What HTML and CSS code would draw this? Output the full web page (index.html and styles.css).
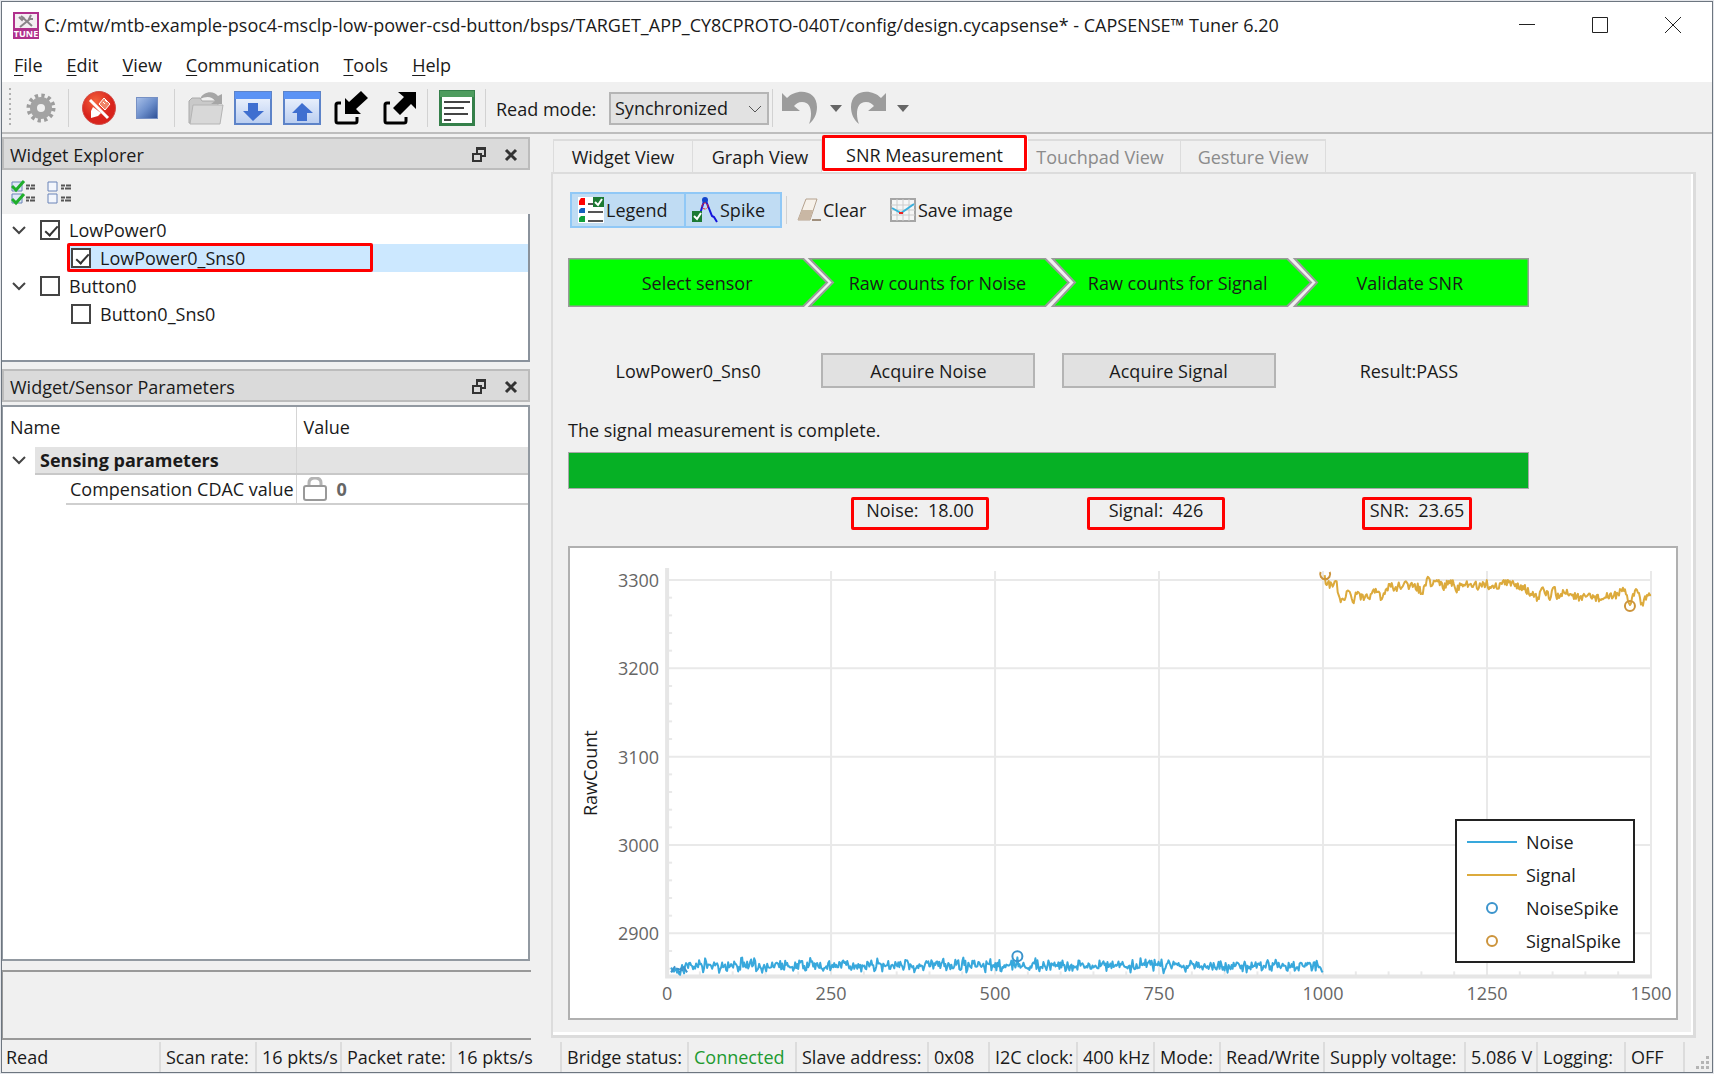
FILE: index.html
```html
<!DOCTYPE html>
<html lang="en">
<head>
<meta charset="utf-8">
<title>CAPSENSE Tuner</title>
<link rel="stylesheet" href="styles.css">
</head>
<body>
<div class="window">
  <header class="titlebar">
    <svg class="app-icon" width="26" height="27" viewBox="0 0 26 27">
      <rect x="1" y="1" width="24" height="25" fill="#f4eef2" stroke="#b0308c" stroke-width="2"/>
      <path d="M8 4l11 10M6 5l3 3 2-3M18 3l-2 4 4 0M17 7L7 15" stroke="#8a8488" stroke-width="2" fill="none"/>
      <rect x="1" y="16" width="24" height="10" fill="#b0308c"/>
      <text x="13" y="25" class="app-icon-text" text-anchor="middle">TUNE</text>
    </svg>
    <h1 class="title">C:/mtw/mtb-example-psoc4-msclp-low-power-csd-button/bsps/TARGET_APP_CY8CPROTO-040T/config/design.cycapsense* - CAPSENSE™ Tuner 6.20</h1>
    <div class="win-controls">
      <button type="button" aria-label="Minimize"><svg width="18" height="18" viewBox="0 0 18 18"><path d="M1 8.500h16" /></svg></button>
      <button type="button" aria-label="Maximize"><svg width="18" height="18" viewBox="0 0 18 18"><path d="M1.500 1.500h15v15h-15z"/></svg></button>
      <button type="button" aria-label="Close"><svg width="18" height="18" viewBox="0 0 18 18"><path d="M1 1l16 16M17 1L1 17"/></svg></button>
    </div>
  </header>

  <nav class="menubar">
    <a href="#"><u>F</u>ile</a>
    <a href="#"><u>E</u>dit</a>
    <a href="#"><u>V</u>iew</a>
    <a href="#"><u>C</u>ommunication</a>
    <a href="#"><u>T</u>ools</a>
    <a href="#"><u>H</u>elp</a>
  </nav>

  <div class="toolbar">
    <span class="handle"></span>
    <button type="button" class="tool tool-gear" aria-label="Configure">
      <svg width="30" height="30" viewBox="0 0 30 30"><circle cx="15" cy="15" r="12" fill="none" stroke="#9d9d9d" stroke-width="5" stroke-dasharray="3.140 3.140"/><circle cx="15" cy="15" r="7.500" fill="none" stroke="#a3a3a3" stroke-width="7"/></svg>
    </button>
    <span class="sep"></span>
    <button type="button" class="tool tool-disconnect" aria-label="Disconnect">
      <svg width="34" height="34" viewBox="0 0 34 34"><defs><radialGradient id="red" cx=".4" cy=".3"><stop offset="0" stop-color="#f4623c"/><stop offset="1" stop-color="#d8231c"/></radialGradient></defs><circle cx="17" cy="17" r="16.500" fill="url(#red)" stroke="#d2504a"/><path d="M8 9l18 18" stroke="#fff" stroke-width="3"/><path d="M17 13l5-6 6 6-5 6z" fill="#f08468" stroke="#fff"/><path d="M21 11l2 2M23 9l2 2" stroke="#fff"/><path d="M11 16l-2 4v7l7-2 3-3z" fill="#fff"/></svg>
    </button>
    <button type="button" class="tool tool-stop" aria-label="Stop">
      <svg width="22" height="22" viewBox="0 0 22 22"><defs><linearGradient id="blue" x1="0" y1="0" x2="1" y2="1"><stop offset="0" stop-color="#a9c1ea"/><stop offset=".5" stop-color="#6d8fcb"/><stop offset="1" stop-color="#2c4f96"/></linearGradient></defs><rect x=".5" y=".5" width="21" height="21" fill="url(#blue)" stroke="#7690c4"/></svg>
    </button>
    <span class="sep"></span>
    <button type="button" class="tool tool-open" aria-label="Open">
      <svg width="36" height="34" viewBox="0 0 36 34"><path d="M1 32V10l3-3h8l2 3h16v22z" fill="#c9c9c9" stroke="#aaa"/><path d="M2 33L5 14h30l-3 19z" fill="#d8d8d8" stroke="#b4b4b4"/><path d="M12 8C15 0 26-1 30 5l4-2v10H23l4-3c-3-5-9-5-15-2z" fill="#a6a6a6"/></svg>
    </button>
    <button type="button" class="tool tool-down" aria-label="Apply to device">
      <svg width="38" height="34" viewBox="0 0 38 34"><defs><linearGradient id="sheet" x1="0" y1="0" x2="0" y2="1"><stop offset="0" stop-color="#f4f8ff"/><stop offset="1" stop-color="#b9cdf0"/></linearGradient></defs><rect x="1" y="1" width="36" height="32" fill="url(#sheet)" stroke="#5d83c8" stroke-width="2"/><rect x="1" y="1" width="36" height="7" fill="#5b93f5"/><path d="M14 12h10v8h6L19 30 9 20h5z" fill="#3f6fd0"/></svg>
    </button>
    <button type="button" class="tool tool-up" aria-label="Apply to project">
      <svg width="38" height="34" viewBox="0 0 38 34"><rect x="1" y="1" width="36" height="32" fill="url(#sheet)" stroke="#5d83c8" stroke-width="2"/><rect x="1" y="1" width="36" height="7" fill="#5b93f5"/><path d="M14 30h10v-8h6L19 12 9 22h5z" fill="#3f6fd0"/></svg>
    </button>
    <button type="button" class="tool tool-import" aria-label="Import">
      <svg width="34" height="34" viewBox="0 0 34 34"><path d="M7 12H4q-2 0-2 2v16q0 2 2 2h17q2 0 2-2v-4" fill="none" stroke="#000" stroke-width="3"/><path d="M11 7l4 4L27 0l7 7-12 11 5 5H11z"/></svg>
    </button>
    <button type="button" class="tool tool-export" aria-label="Export">
      <svg width="34" height="34" viewBox="0 0 34 34"><path d="M7 12H4q-2 0-2 2v16q0 2 2 2h17q2 0 2-2v-4" fill="none" stroke="#000" stroke-width="3"/><path d="M15 1h18v17l-5-5-11 11-7-7L21 6z"/></svg>
    </button>
    <span class="sep"></span>
    <button type="button" class="tool tool-log" aria-label="Log">
      <svg width="36" height="36" viewBox="0 0 36 36"><rect x="1.500" y="1.500" width="33" height="33" fill="#fff" stroke="#35804a" stroke-width="3"/><rect x="1" y="1" width="34" height="6" fill="#4e9c5e"/><path d="M5 12h26M5 18h20M5 24h24M5 30h7" stroke="#444" stroke-width="2"/></svg>
    </button>
    <span class="sep"></span>
    <label class="mode-label" for="mode">Read mode:</label>
    <span class="mode">
      <select id="mode"><option>Synchronized</option></select>
      <svg width="14" height="8" viewBox="0 0 14 8"><path d="M1 1l6 6 6-6" fill="none" stroke="#555"/></svg>
    </span>
    <span class="sep"></span>
    <button type="button" class="tool tool-undo" aria-label="Undo">
      <svg width="38" height="34" viewBox="0 0 38 34"><path d="M1 2l5 5C15-3 36-2 36 16c0 7-3 13-8 17 3-7 4-22-7-22-4 0-6 2-8 4l6 5H1z" fill="#9c9c9c"/></svg>
    </button>
    <button type="button" class="tool drop" aria-label="Undo history"><svg width="12" height="7" viewBox="0 0 12 7"><path d="M0 0h12L6 7z" fill="#666"/></svg></button>
    <button type="button" class="tool tool-redo" aria-label="Redo">
      <svg width="38" height="34" viewBox="0 0 38 34"><path d="M37 2l-5 5C23-3 2-2 2 16c0 7 3 13 8 17-3-7-4-22 7-22 4 0 6 2 8 4l-6 5h18z" fill="#9c9c9c"/></svg>
    </button>
    <button type="button" class="tool drop" aria-label="Redo history"><svg width="12" height="7" viewBox="0 0 12 7"><path d="M0 0h12L6 7z" fill="#666"/></svg></button>
  </div>

  <main class="workspace">
    <aside class="docks">
      <section class="dock">
        <header class="dock-title">
          <h2>Widget Explorer</h2>
          <button type="button" aria-label="Float"><svg width="14" height="15" viewBox="0 0 14 15"><path d="M5 6V1h8v8h-3M4 2h9" fill="none" stroke="#333" stroke-width="2"/><path d="M1 7h8v7H1z" fill="none" stroke="#333" stroke-width="2"/></svg></button>
          <button type="button" aria-label="Close"><svg width="14" height="14" viewBox="0 0 14 14"><path d="M2 2l10 10M12 2L2 12" stroke="#333" stroke-width="3"/></svg></button>
        </header>
        <div class="dock-tools">
          <button type="button" aria-label="Check all"><svg width="24" height="26" viewBox="0 0 24 26"><g fill="#dfe8f8" stroke="#6b84b8"><path d="M1 2h10v9H1zM1 14h10v9H1z"/></g><path d="M1 6l4 4 8-9M1 19l4 4 8-9" fill="none" stroke="#1fae2b" stroke-width="3"/><path d="M15 5.500h4m1 0h4M15 8.500h3m1 0h5M15 17.500h4m1 0h4M15 20.500h3m1 0h5" stroke="#555" stroke-width="2"/></svg></button>
          <button type="button" aria-label="Uncheck all"><svg width="24" height="26" viewBox="0 0 24 26"><g fill="#f3f6fc" stroke="#6b84b8"><path d="M1 2h9v9H1zM1 14h9v9H1z"/></g><path d="M14 5.500h4m1 0h5M14 8.500h3m1 0h6M14 17.500h4m1 0h5M14 20.500h3m1 0h6" stroke="#555" stroke-width="2"/></svg></button>
        </div>
        <ul class="tree">
          <li class="row"><svg class="chev" width="14" height="9" viewBox="0 0 14 9"><path d="M1 1l6 6 6-6"/></svg><input type="checkbox" id="w1" checked><label for="w1">LowPower0</label></li>
          <li class="row child selected"><input type="checkbox" id="w2" checked><label for="w2">LowPower0_Sns0</label><span class="mark mark-row"></span></li>
          <li class="row"><svg class="chev" width="14" height="9" viewBox="0 0 14 9"><path d="M1 1l6 6 6-6"/></svg><input type="checkbox" id="w3"><label for="w3">Button0</label></li>
          <li class="row child"><input type="checkbox" id="w4"><label for="w4">Button0_Sns0</label></li>
        </ul>
      </section>

      <section class="dock dock-grow">
        <header class="dock-title">
          <h2>Widget/Sensor Parameters</h2>
          <button type="button" aria-label="Float"><svg width="14" height="15" viewBox="0 0 14 15"><path d="M5 6V1h8v8h-3M4 2h9" fill="none" stroke="#333" stroke-width="2"/><path d="M1 7h8v7H1z" fill="none" stroke="#333" stroke-width="2"/></svg></button>
          <button type="button" aria-label="Close"><svg width="14" height="14" viewBox="0 0 14 14"><path d="M2 2l10 10M12 2L2 12" stroke="#333" stroke-width="3"/></svg></button>
        </header>
        <div class="params">
          <table>
            <colgroup><col class="col-gutter"><col class="col-indent"><col class="col-name"><col></colgroup>
            <thead><tr><th class="name" colspan="3">Name</th><th class="value">Value</th></tr></thead>
            <tbody>
              <tr class="group"><td class="gutter"><svg class="chev" width="14" height="9" viewBox="0 0 14 9"><path d="M1 1l6 6 6-6"/></svg></td><td colspan="2" class="group-name">Sensing parameters</td><td></td></tr>
              <tr class="param"><td class="gutter"></td><td class="indent"></td><td class="param-name">Compensation CDAC value</td><td class="param-value"><div><svg width="24" height="24" viewBox="0 0 24 24"><path d="M6 10V6q0-5 6-5t6 5v4" fill="none" stroke="#b4b4b4" stroke-width="3"/><rect x="1" y="9" width="22" height="14" rx="2" fill="#fff" stroke="#999" stroke-width="2"/></svg>0</div></td></tr>
            </tbody>
          </table>
        </div>
      </section>
      <div class="notes"></div>
    </aside>

    <section class="views">
      <div class="tabs">
        <button type="button" class="tab tab-widget">Widget View</button>
        <button type="button" class="tab tab-graph">Graph View</button>
        <button type="button" class="tab tab-snr active">SNR Measurement<span class="mark"></span></button>
        <button type="button" class="tab tab-touch" disabled>Touchpad View</button>
        <button type="button" class="tab tab-gesture" disabled>Gesture View</button>
      </div>
      <div class="panel">
        <div class="panel-tools">
          <button type="button" class="toggle toggle-legend"><svg width="26" height="26" viewBox="0 0 26 26"><rect width="26" height="26" fill="#fff"/><path d="M1 8V4l2-3h4v7z" fill="#f00"/><path d="M1 16v-3l2-2h4v5z" fill="#1560bd"/><path d="M1 25v-4l2-2h4v6z" fill="#12a03a"/><path d="M10 7h6M10 15h15M10 24h15" stroke="#555" stroke-width="2"/><rect x="15" y="0" width="11" height="10" fill="#1c7a33"/><path d="M17 5l3 3 4-6" fill="none" stroke="#fff" stroke-width="2"/></svg>Legend</button>
          <button type="button" class="toggle toggle-spike"><svg width="26" height="26" viewBox="0 0 26 26"><path d="M4 17h4l4-13h2l6 15 2 1 3 5" fill="none" stroke="#1414dc" stroke-width="2"/><circle cx="13" cy="3" r="3" fill="#14c"/><circle cx="13" cy="9" r="3" fill="none" stroke="#e22" stroke-dasharray="3 1"/><rect x="0" y="14" width="10" height="11" fill="#1c7a33"/><path d="M2 19l3 3 4-6" fill="none" stroke="#fff" stroke-width="2"/></svg>Spike</button>
          <span class="sep"></span>
          <button type="button" class="plain plain-clear"><svg width="24" height="24" viewBox="0 0 24 24"><path d="M9 1h11l-7 21H1z" fill="#f6f1ea" stroke="#b5a28e"/><path d="M5 12h11l-3 10H1z" fill="#c9b7a4"/><path d="M15 22h9" stroke="#a08f7d" stroke-width="2"/></svg>Clear</button>
          <button type="button" class="plain"><svg width="26" height="24" viewBox="0 0 26 24"><rect x="1" y="1" width="24" height="22" fill="#f6f6f6" stroke="#a5a5a5" stroke-width="2"/><path d="M7 1v22M13 1v22M19 1v22M1 7h24M1 12h24M1 17h24" stroke="#ccc"/><path d="M2 10l9 5 13-9" fill="none" stroke="#3ab0dc" stroke-width="2"/><path d="M9 15h4" stroke="#e22" stroke-width="2"/></svg>Save image</button>
        </div>

        <div class="wizard">
          <ol class="steps">
            <svg class="steps-shape" viewBox="0 0 961 49" preserveAspectRatio="none">
              <path d="M.5.500H235L259 24.500 235 48.500H.5z"/>
              <path d="M241.500.500H477L500.500 24.500 477 48.500H241.500L265 24.500z"/>
              <path d="M484.500.500H719L743 24.500 719 48.500H484.500L507 24.500z"/>
              <path d="M726.500.500H960.500V48.500H726.500L749 24.500z"/>
            </svg>
            <li>Select sensor</li><li>Raw counts for Noise</li><li>Raw counts for Signal</li><li>Validate SNR</li>
          </ol>
          <div class="actions">
            <span>LowPower0_Sns0</span>
            <button type="button">Acquire Noise</button>
            <button type="button">Acquire Signal</button>
            <span>Result:PASS</span>
          </div>
          <p class="message">The signal measurement is complete.</p>
          <div class="progress" role="progressbar" aria-label="Measurement" aria-valuenow="100"></div>
          <div class="readings">
            <output class="noise">Noise:  18.00</output>
            <output class="signal">Signal:  426</output>
            <output class="snr">SNR:  23.65</output>
          </div>
        </div>

        <div class="chart">
          <svg class="plot" viewBox="0 0 1105 468" preserveAspectRatio="xMinYMin meet" id="plot">
            <g class="grid" id="grid"></g>
            <g class="axis-text" id="labels"></g>
            <text class="axis-title" transform="translate(27 225) rotate(-90)" text-anchor="middle">RawCount</text>
            <polyline class="noise-line" id="noise"/>
            <polyline class="signal-line" id="signal"/>
            <g class="noise-spike"><circle cx="447" cy="408" r="5"/><path d="M101 424l4-6M109 424l3-5M113 418l4 6M106 420l7 2"/></g>
            <g class="signal-spike"><path d="M750 24a5 5 0 1 0 9 0"/><circle cx="1059" cy="58" r="5"/></g>
          </svg>
          <ul class="legend">
            <li><svg width="50" height="14" viewBox="0 0 50 14"><path class="noise-line" d="M0 7h50"/></svg>Noise</li>
            <li><svg width="50" height="14" viewBox="0 0 50 14"><path class="signal-line" d="M0 7h50"/></svg>Signal</li>
            <li><svg width="50" height="14" viewBox="0 0 50 14"><circle class="noise-spike" cx="25" cy="7" r="5"/></svg>NoiseSpike</li>
            <li><svg width="50" height="14" viewBox="0 0 50 14"><circle class="signal-spike" cx="25" cy="7" r="5"/></svg>SignalSpike</li>
          </ul>
        </div>
      </div>
    </section>
  </main>

  <footer class="status">
    <span>Read</span><span>Scan rate:</span><span>16 pkts/s</span><span>Packet rate:</span><span>16 pkts/s</span>
    <span>Bridge status:</span><span class="ok">Connected</span><span>Slave address:</span><span>0x08</span>
    <span>I2C clock:</span><span>400 kHz</span><span>Mode:</span><span>Read/Write</span><span>Supply voltage:</span>
    <span>5.086 V</span><span>Logging:</span><span>OFF</span>
    <span class="grip"><svg width="14" height="14" viewBox="0 0 14 14"><path d="M11 0h3v3h-3zM6 5h3v3H6zM11 5h3v3h-3zM1 10h3v3H1zM6 10h3v3H6zM11 10h3v3h-3z" fill="#b4b4b4"/></svg></span>
  </footer>
</div>
<script src="chart.js"></script>
</body>
</html>
```
FILE: styles.css
```css
:root {
  --face: #f0f0f0;
  --line: #dcdcdc;
  --text: #1a1a1a;
}

* { box-sizing: border-box; }

body {
  margin: 0;
  padding: 1px;
  background: #e4e6ea;
  color: var(--text);
  font: 18px/24px "Open Sans", "Noto Sans", sans-serif;
}

button, select, input { font: inherit; color: inherit; margin: 0; }
button { border: 0; padding: 0; background: none; }
svg { display: block; flex: none; }
h1, h2, p, ul, ol { margin: 0; padding: 0; font: inherit; list-style: none; }

.window {
  display: flex;
  flex-direction: column;
  min-height: calc(100vh - 2px);
  border: 1px solid #6d7680;
  background: var(--face);
}

/* title and menu */
.titlebar { display: flex; align-items: center; height: 46px; padding-left: 11px; background: #fff; }
.app-icon-text { font: 700 9px "Open Sans", sans-serif; fill: #fff; }
.title { flex: 1; margin-left: 5px; white-space: nowrap; }
.win-controls { display: flex; gap: 55px; padding-right: 30px; }
.win-controls svg { fill: none; stroke: #222; stroke-width: 1px; }

.menubar { display: flex; align-items: center; gap: 24px; height: 34px; padding-left: 12px; background: #fff; }
.menubar a { color: inherit; text-decoration: none; }
.menubar u { text-underline-offset: 3px; }

/* main toolbar */
.toolbar { display: flex; align-items: center; height: 52px; padding: 2px 0 0 7px; border-bottom: 2px solid #bdbdbd; }
.handle { width: 2px; height: 40px; background: repeating-linear-gradient(#b0b0b0 0 2px, transparent 2px 5px); }
.sep { width: 1px; height: 38px; background: #d2d2d2; }
.tool-gear { margin: 0 12px 0 15px; }
.tool-disconnect { margin: 0 20px 0 13px; }
.tool-stop { margin-right: 16px; }
.tool-open { margin: 0 10px 0 13px; }
.tool-down { margin-right: 11px; }
.tool-up { margin-right: 13px; }
.tool-import { margin-right: 15px; }
.tool-export { margin-right: 10px; }
.tool-log { margin: 0 10px 0 11px; }
.mode-label { width: 113px; margin-left: 10px; padding-top: 2px; white-space: nowrap; }
.mode { position: relative; margin-right: 3px; }
.mode select { display: block; width: 160px; height: 33px; padding: 0 4px; border: 2px solid #b5b5b5; border-radius: 0; background: #e2e2e2; appearance: none; }
.mode svg { position: absolute; top: 13px; right: 7px; pointer-events: none; }
.tool-undo { margin: 0 11px 0 8px; }
.tool-redo { margin: 0 10px 0 7px; }

/* workspace */
.workspace { display: grid; grid-template-columns: 529px minmax(0, 1fr); flex: 1; gap: 20px; }
.docks { display: flex; flex-direction: column; gap: 7px; padding: 3px 0 0; }
.dock { display: flex; flex-direction: column; width: 528px; }
.dock-grow { flex: 1; }
.dock-title { display: flex; align-items: center; height: 33px; padding: 2px 10px 0 6px; border: 2px solid #bcbcbc; background: #dadada; }
.dock-title h2 { flex: 1; }
.dock-title button + button { margin-left: 18px; }
.dock-tools { display: flex; gap: 12px; height: 44px; padding: 10px 0 0 9px; }
.dock-tools button { height: 26px; }

.tree { height: 148px; padding-top: 2px; border: solid #8a929c; border-width: 0 2px 2px 0; background: #fff; }
.row { position: relative; display: flex; align-items: center; height: 28px; padding-left: 10px; }
.row.child { margin-left: 65px; padding-left: 4px; }
.row.selected { background: #cce8ff; }
.chev { fill: none; stroke: #444; stroke-width: 2px; margin-right: 14px; }
.row input { position: relative; width: 20px; height: 20px; margin-right: 9px; border: 2px solid #444; background: #fff; appearance: none; }
.row input:checked::after { content: ""; position: absolute; left: 6px; top: 1px; width: 5px; height: 11px; border: solid #333; border-width: 0 2px 2px 0; transform: rotate(42deg); }

/* red highlight frames */
.mark { position: absolute; inset: -1px 0 0; border: 3px solid #f00; border-radius: 2px; pointer-events: none; }
.mark-row { right: 155px; }

.params { flex: 1; margin-top: 3px; border: 2px solid #9299a1; border-left-width: 1px; background: #fff; }
.params table { width: 100%; border-collapse: collapse; table-layout: fixed; }
.params th, .params td { padding: 0; font-weight: 400; text-align: left; white-space: nowrap; }
.col-gutter { width: 32px; }
.col-indent { width: 31px; }
.col-name { width: 230px; }
.params thead tr { height: 40px; }
.params .name, .params .group-name, .params .param-name { border-right: 1px solid #d5d5d5; }
.params .name, .params .value { padding-left: 7px; }
.params .gutter { padding-left: 9px; }
.group { height: 27px; }
.group td:not(.gutter) { background: #e3e3e3; border-bottom: 2px solid #c8c8c8; }
.params .group-name { padding-left: 5px; font-weight: 700; }
.param { height: 30px; }
.param td:not(.gutter):not(.indent) { border-bottom: 2px solid #cfcfcf; }
.params .param-name { padding-left: 4px; }
.params .param-value { padding-left: 6px; color: #666; font-weight: 700; }
.param-value div { display: flex; align-items: center; gap: 10px; }

.notes { width: 529px; height: 70px; margin: 2px 0 0; border: solid #999; border-width: 2px 0 2px 1px; }

/* view tabs */
.views { display: flex; flex-direction: column; padding: 5px 16px 2px 0; }
.tabs { display: flex; height: 33px; padding-left: 2px; }
.tab { position: relative; height: 33px; border: solid var(--line); border-width: 2px 1px 0 0; white-space: nowrap; }
.tab:disabled { color: #8b8b8b; }
.tab-widget { width: 140px; border-left-width: 1px; }
.tab-graph { width: 129px; padding-left: 6px; }
.tab-snr { width: 206px; }
.tab-touch { width: 153px; padding-right: 8px; }
.tab-gesture { width: 145px; }
.tab.active { z-index: 1; height: 36px; margin-top: -3px; border-color: #fff; background: #fff; }
.tab .mark { inset: -3px 0 1px; }

.panel { display: flex; flex: 1; flex-direction: column; padding: 18px 15px 15px; border: 1px solid var(--line); border-width: 2px 3px 3px 2px; box-shadow: inset -2px -3px #fff; }
.panel-tools { display: flex; align-items: center; height: 36px; margin-left: 2px; }
.panel-tools button { display: flex; align-items: center; gap: 2px; }
.toggle { height: 36px; padding-left: 6px; border: 2px solid #90c8f6; background: #c0dcf3; }
.toggle-legend { width: 116px; }
.toggle-spike { width: 98px; margin: 0 4px 0 -2px; }
.panel-tools .sep { height: 28px; }
.plain-clear { width: 83px; margin: 0 10px; }

.wizard { max-width: 961px; margin-top: 30px; }
.steps, .actions { display: grid; grid-template-columns: repeat(4, 1fr); }
.steps { position: relative; height: 49px; line-height: 50px; text-align: center; }
.steps li { position: relative; padding-left: 18px; white-space: nowrap; }
.steps li:last-child { padding-left: 2px; }
.steps-shape { position: absolute; inset: 0; width: 100%; height: 100%; fill: #0f0; stroke: #9a9a9a; stroke-width: 2px; }
.actions { align-items: center; justify-items: center; margin-top: 46px; }
.actions button { width: 214px; height: 35px; border: 2px solid #b4b4b4; background: #e1e1e1; }
.message { margin-top: 30px; }
.progress { height: 37px; margin-top: 10px; border: 1px solid #a9a9a9; background: #06b025; }
.readings { display: grid; grid-template-columns: 283px 138px 98px 138px 137px 110px; margin-top: 8px; }
.readings output { height: 33px; border: 3px solid #f00; border-radius: 2px; line-height: 21px; text-align: center; white-space: pre; }
.readings .noise { grid-column: 2; }
.readings .signal { grid-column: 4; }
.readings .snr { grid-column: 6; }

/* chart */
.chart { position: relative; flex: 1; margin-top: 16px; border: 2px solid #b0b0b0; background: #fff; }
.plot { width: 100%; }
.grid { fill: none; stroke: #e9e9e9; stroke-width: 2px; }
.grid .axis { stroke: #e6e6e6; stroke-width: 4px; }
.axis-text { fill: #666; }
.axis-title { fill: var(--text); }
.noise-line, .signal-line { fill: none; stroke-width: 2px; stroke-linejoin: round; }
.noise-line { stroke: #38a8dc; }
.signal-line { stroke: #dcaa3c; }
.noise-spike, .signal-spike { fill: none; stroke-width: 2px; }
.noise-spike { stroke: #3c94cc; }
.signal-spike { stroke: #cc943c; }
.legend { position: absolute; right: 41px; bottom: 55px; width: 180px; padding: 4px 0 4px 10px; border: 2px solid #222; background: #fff; }
.legend li { display: flex; align-items: center; gap: 9px; height: 33px; }

/* status bar */
.status { display: grid; grid-template-columns: 157px 96px 85px 110px 110px 127px 108px 132px 61px 88px 77px 66px 104px 141px 72px 88px 59px 1fr; height: 32px; padding: 2px 0; }
.status span { padding-left: 5px; border-left: 2px solid var(--line); line-height: 30px; white-space: nowrap; }
.status span:first-child { padding-left: 4px; border: 0; }
.status .ok { color: #209a30; }
.status .grip { padding: 14px 0 0 10px; }
```
FILE: chart.js
```js
const X0 = 97, X1 = 1080, Y0 = 428, TOP = 23;
const px = v => X0 + v * (X1 - X0) / 1500;
const py = v => 385 - (v - 2900) * 0.8825;

// grid, minor ticks and axis labels
let grid = "", labels = "";
for (let v = 0; v <= 1500; v += 50) {
  grid += v % 250 === 0
    ? `<path d="M${px(v)} ${TOP}V${Y0}"/>`
    : `<path d="M${px(v)} ${Y0 - 5}v5"/>`;
  if (v % 250 === 0) labels += `<text x="${px(v)}" y="452" text-anchor="middle">${v}</text>`;
}
for (let v = 2860; v <= 3300; v += 20) {
  grid += v % 100 === 0
    ? `<path d="M${X0} ${py(v)}H${X1}"/>`
    : `<path d="M${X0} ${py(v)}h5"/>`;
  if (v % 100 === 0) labels += `<text x="89" y="${py(v) + 7}" text-anchor="end">${v}</text>`;
}
grid += `<path class="axis" d="M${X0} ${TOP - 3}V${Y0}H${X1 + 1}"/>`;
document.getElementById("grid").innerHTML = grid;
document.getElementById("labels").innerHTML = labels;

let seed = 7;
const rnd = () => (seed = (seed * 16807) % 2147483647) / 2147483647 - 0.5;

// noise samples
const noise = [];
for (let x = X0 + 4; x <= 752; x += 1) {
  const start = x < 116 ? 4 : 0;
  const end = x > 748 ? 3 : 0;
  const y = x === 447 ? 409 : 417 + start + end + (rnd() + rnd() + rnd()) * 6;
  noise.push([x, y]);
}
document.getElementById("noise").setAttribute("points", noise.join(" "));

// signal trend with sample noise
const trend = [[754, 27], [756, 37], [761, 36], [765, 33], [769, 50], [775, 49], [778, 43], [782, 54], [786, 46], [793, 52], [800, 46], [807, 44], [810, 52], [814, 46], [818, 36], [824, 41], [834, 34], [838, 41], [844, 36], [852, 46], [856, 31], [861, 38], [868, 32], [872, 40], [878, 33], [888, 42], [890, 37], [904, 35], [908, 40], [912, 34], [923, 40], [930, 35], [945, 36], [952, 38], [961, 47], [968, 51], [970, 42], [980, 49], [982, 40], [988, 50], [993, 44], [1000, 46], [1011, 52], [1017, 47], [1031, 51], [1043, 47], [1053, 43], [1059, 57], [1062, 46], [1066, 42], [1071, 55], [1076, 47], [1080, 47]];
const signal = [];
for (let i = 1; i < trend.length; i++) {
  const [ax, ay] = trend[i - 1], [bx, by] = trend[i];
  signal.push([ax, ay]);
  for (let x = ax + 1; x < bx; x += 1) {
    signal.push([x, ay + (by - ay) * (x - ax) / (bx - ax) + rnd() * 9]);
  }
}
signal.push(trend[trend.length - 1]);
document.getElementById("signal").setAttribute("points", signal.join(" "));
```
